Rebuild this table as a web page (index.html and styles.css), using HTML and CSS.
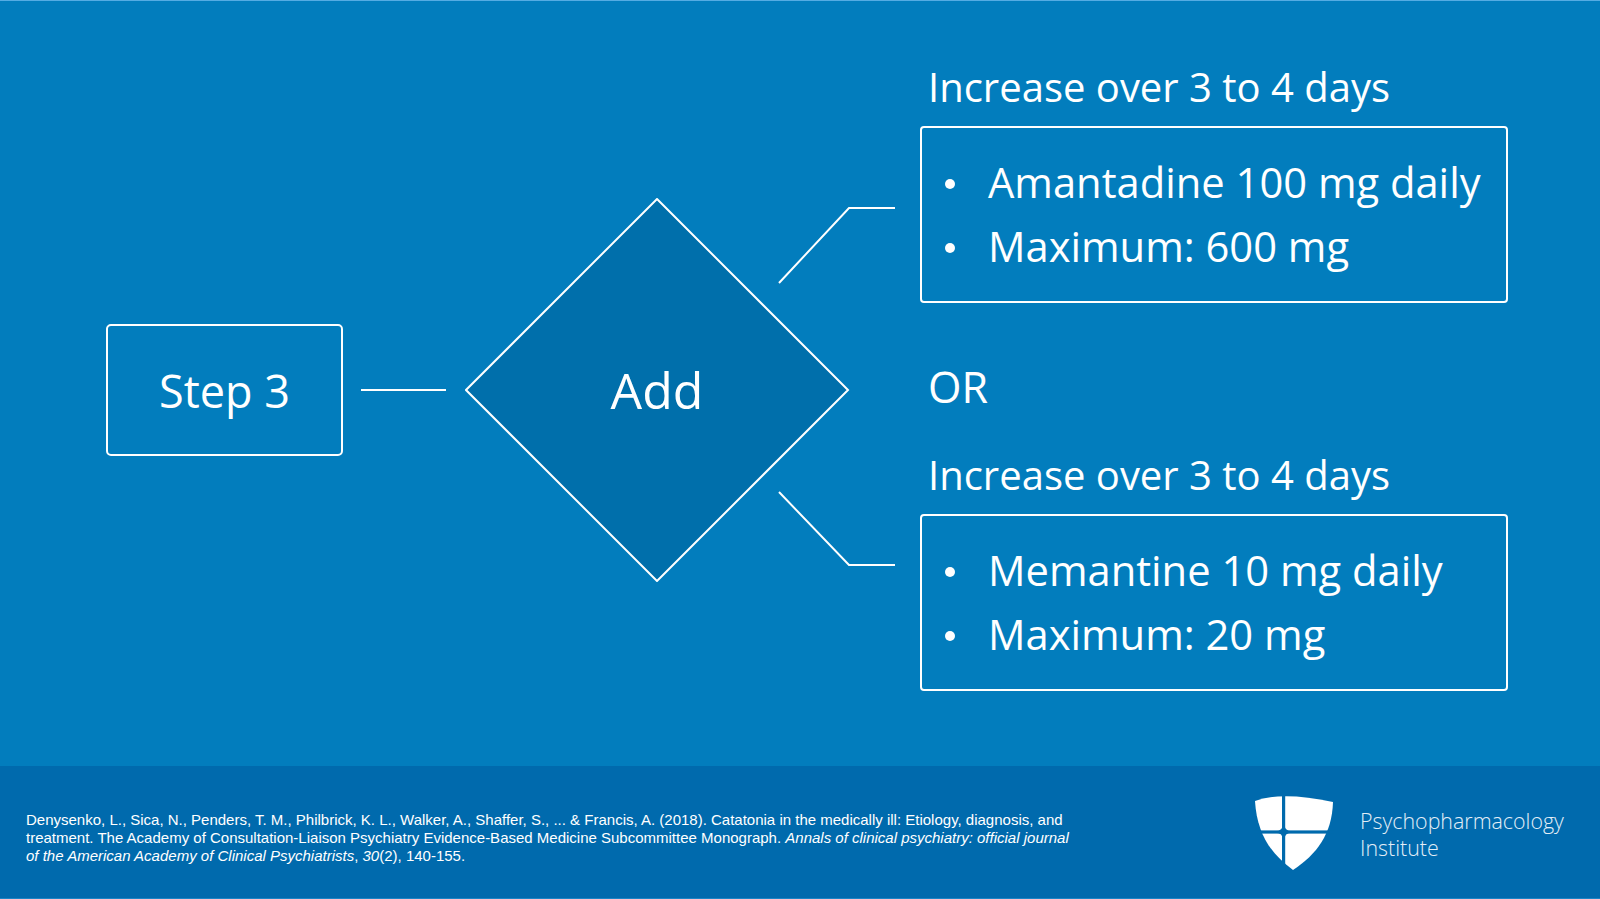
FILE: index.html
```html
<!DOCTYPE html>
<html lang="en">
<head>
<meta charset="utf-8">
<title>Step 3 – Add</title>
<link rel="stylesheet" href="styles.css">
</head>
<body>
<div class="slide">
  <main class="stage">
    <div class="flow">
      <div class="step">Step 3</div>
      <div class="link"></div>
      <div class="decision">
        <svg class="decision-art" width="431" height="384" viewBox="0 0 431 384" aria-hidden="true">
          <polygon points="192,1 383,192 192,383 1,192" fill="#006fab" stroke="#ffffff" stroke-width="2"/>
          <polyline points="314,85 384,10 430,10" fill="none" stroke="#ffffff" stroke-width="2"/>
          <polyline points="314,294 384,367 430,367" fill="none" stroke="#ffffff" stroke-width="2"/>
        </svg>
        <span class="decision-label">Add</span>
      </div>
    </div>
    <div class="options">
      <h2 class="option-title">Increase over 3 to 4 days</h2>
      <ul class="option-box">
        <li><span class="dot"></span>Amantadine 100 mg daily</li>
        <li><span class="dot"></span>Maximum: 600 mg</li>
      </ul>
      <p class="or">OR</p>
      <h2 class="option-title">Increase over 3 to 4 days</h2>
      <ul class="option-box">
        <li><span class="dot"></span>Memantine 10 mg daily</li>
        <li><span class="dot"></span>Maximum: 20 mg</li>
      </ul>
    </div>
  </main>
  <footer class="footer">
    <p class="citation">Denysenko, L., Sica, N., Penders, T. M., Philbrick, K. L., Walker, A., Shaffer, S., ... &amp; Francis, A. (2018). Catatonia in the medically ill: Etiology, diagnosis, and<br>treatment. The Academy of Consultation-Liaison Psychiatry Evidence-Based Medicine Subcommittee Monograph. <i>Annals of clinical psychiatry: official journal</i><br><i>of the American Academy of Clinical Psychiatrists</i>, <i>30</i>(2), 140-155.</p>
    <div class="brand">
      <svg class="shield" width="80" height="77" viewBox="0 0 80 77" aria-hidden="true">
        <path d="M1,7 Q28,-3 79,8 C78,40 63,60 39,76 C17,60 3,40 1,7 Z" fill="#ffffff"/>
        <rect x="28" y="0" width="3.2" height="77" fill="#006aad"/>
        <rect x="0" y="36.4" width="80" height="3.2" fill="#006aad"/>
        <path d="M29.6,30 Q29.6,38 37.6,38 Q29.6,38 29.6,46 Q29.6,38 21.6,38 Q29.6,38 29.6,30 Z" fill="#006aad" stroke="#006aad" stroke-width="1.5"/>
      </svg>
      <div class="brand-name">Psychopharmacology<br>Institute</div>
    </div>
  </footer>
</div>
</body>
</html>
```

FILE: styles.css
```css
html, body {
  margin: 0;
  padding: 0;
}

body {
  width: 1600px;
  height: 899px;
  overflow: hidden;
  background: #027dbd;
  font-family: "Open Sans", "DejaVu Sans", sans-serif;
  color: #ffffff;
}

.slide {
  width: 1600px;
  height: 899px;
  display: flex;
  flex-direction: column;
  border-top: 1px solid #55ace3;
  box-sizing: border-box;
}

.stage {
  height: 765px;
  flex: none;
  display: flex;
  align-items: flex-start;
}

.flow {
  display: flex;
  align-items: center;
  height: 384px;
  padding: 197px 0 0 106px;
}

.step {
  width: 233px;
  height: 128px;
  border: 2px solid #ffffff;
  border-radius: 5px;
  display: flex;
  align-items: center;
  justify-content: center;
  font-size: 45px;
  line-height: 1;
}

.link {
  width: 85px;
  height: 2px;
  background: #ffffff;
  margin: 0 19px 0 18px;
}

.decision {
  position: relative;
  width: 431px;
  height: 384px;
}

.decision-art {
  display: block;
}

.decision-label {
  position: absolute;
  left: 0;
  top: 0;
  width: 384px;
  height: 384px;
  display: flex;
  align-items: center;
  justify-content: center;
  font-size: 50px;
  line-height: 1;
}

.options {
  margin-left: 24px;
  padding-top: 64px;
  width: 588px;
}

.option-title {
  margin: 0 0 17px 8px;
  font-size: 40px;
  font-weight: 400;
  line-height: 44px;
  white-space: nowrap;
}

.option-box {
  list-style: none;
  margin: 0;
  padding: 22px 0 23px 0;
  border: 2px solid #ffffff;
  border-radius: 4px;
}

.option-box li {
  display: flex;
  align-items: center;
  font-size: 41.7px;
  line-height: 64px;
  white-space: nowrap;
}

.dot {
  flex: none;
  width: 10px;
  height: 10px;
  border-radius: 50%;
  background: #ffffff;
  margin: 0 33px 0 23px;
  position: relative;
  top: 2px;
}

.or {
  margin: 52px 0 34px 8px;
  font-size: 43px;
  line-height: 64px;
}

.footer {
  flex: 1;
  background: #006aad;
  display: flex;
  align-items: center;
  border-bottom: 1px solid #1a84c6;
}

.citation {
  box-sizing: border-box;
  width: 1254px;
  margin: 0;
  padding: 12px 0 0 26px;
  font-family: "Liberation Sans", Arial, sans-serif;
  font-size: 15px;
  line-height: 18.3px;
  white-space: nowrap;
}

.brand {
  display: flex;
  align-items: center;
}

.shield {
  display: block;
  flex: none;
}

.brand-name {
  margin-left: 26px;
  padding-top: 4px;
  font-size: 21.4px;
  font-weight: 300;
  line-height: 27px;
  color: #e3eef7;
}
```
